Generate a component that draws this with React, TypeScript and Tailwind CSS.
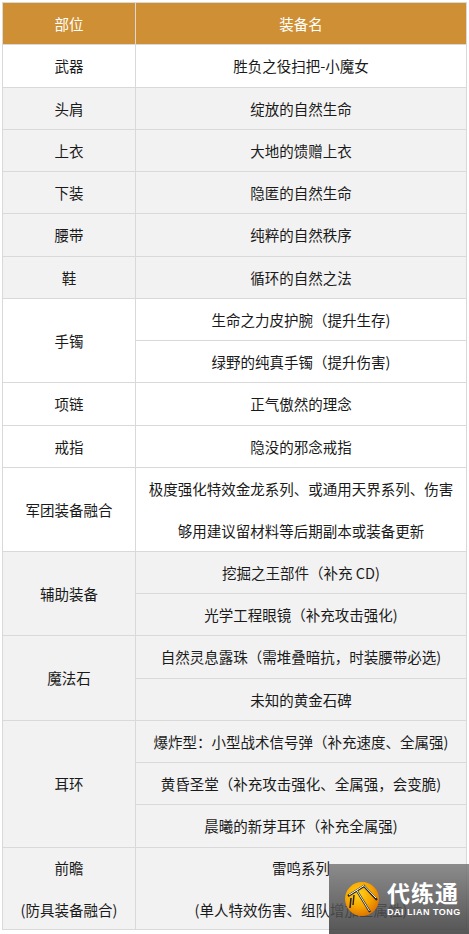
import React from "react";

type Row = {
  part: string[];
  items: string[][];
  h: number[];
  gray: boolean;
};

const rows: Row[] = [
  { part: ["武器"], items: [["胜负之役扫把-小魔女"]], h: [43], gray: false },
  { part: ["头肩"], items: [["绽放的自然生命"]], h: [42], gray: true },
  { part: ["上衣"], items: [["大地的馈赠上衣"]], h: [42], gray: true },
  { part: ["下装"], items: [["隐匿的自然生命"]], h: [42], gray: true },
  { part: ["腰带"], items: [["纯粹的自然秩序"]], h: [43], gray: true },
  { part: ["鞋"], items: [["循环的自然之法"]], h: [42], gray: true },
  {
    part: ["手镯"],
    items: [["生命之力皮护腕（提升生存)"], ["绿野的纯真手镯（提升伤害)"]],
    h: [42, 42],
    gray: false,
  },
  { part: ["项链"], items: [["正气傲然的理念"]], h: [43], gray: false },
  { part: ["戒指"], items: [["隐没的邪念戒指"]], h: [42], gray: false },
  {
    part: ["军团装备融合"],
    items: [["极度强化特效金龙系列、或通用天界系列、伤害", "够用建议留材料等后期副本或装备更新"]],
    h: [84],
    gray: false,
  },
  {
    part: ["辅助装备"],
    items: [["挖掘之王部件（补充 CD)"], ["光学工程眼镜（补充攻击强化)"]],
    h: [42, 42],
    gray: true,
  },
  {
    part: ["魔法石"],
    items: [["自然灵息露珠（需堆叠暗抗，时装腰带必选)"], ["未知的黄金石碑"]],
    h: [43, 42],
    gray: true,
  },
  {
    part: ["耳环"],
    items: [
      ["爆炸型：小型战术信号弹（补充速度、全属强)"],
      ["黄昏圣堂（补充攻击强化、全属强，会变脆)"],
      ["晨曦的新芽耳环（补充全属强)"],
    ],
    h: [42, 42, 43],
    gray: true,
  },
  {
    part: ["前瞻", "(防具装备融合)"],
    items: [["雷鸣系列", "(单人特效伤害、组队增加全属性)"]],
    h: [82],
    gray: true,
  },
];

// lines inside a cell sit ~42px apart, like the source table's paragraphs
function Lines({ lines }: { lines: string[] }) {
  return (
    <div className="flex flex-col items-center gap-[22px]">
      {lines.map((l, i) => (
        <div key={i} className="leading-[20px] whitespace-nowrap">
          {l}
        </div>
      ))}
    </div>
  );
}

function Watermark() {
  return (
    <div className="absolute left-[329px] top-[864px] w-[140px] h-[70px] bg-gradient-to-b from-[#7a7a7a]/85 to-[#3a3a3a]/85 flex items-center pl-[15px] gap-[7px]">
      <svg width="36" height="36" viewBox="0 0 36 36">
        <defs>
          <radialGradient id="og" cx="40%" cy="35%" r="65%">
            <stop offset="0%" stopColor="#ffd21a" />
            <stop offset="60%" stopColor="#f7a500" />
            <stop offset="100%" stopColor="#e07800" />
          </radialGradient>
        </defs>
        <circle cx="18" cy="18" r="17" fill="url(#og)" />
        <path d="M4 15 L20 5 L33 19" fill="none" stroke="#222" strokeWidth="2.2" />
        <path d="M5 14 L20 4.5 L32 17" fill="none" stroke="#fff" strokeWidth="1" />
        <path d="M13 10 L26 31" stroke="#222" strokeWidth="2.2" />
        <path d="M12.5 9 L25.5 30" stroke="#fff" strokeWidth="0.9" />
        <path d="M7 17 L6 27" stroke="#222" strokeWidth="1.6" />
        <path d="M10 14 L9 24" stroke="#222" strokeWidth="1.4" />
      </svg>
      <div className="flex flex-col items-start text-white">
        <div className="text-[23px] leading-[24px] font-bold tracking-[1px] [font-family:'Noto_Sans_CJK_SC',sans-serif]">
          代练通
        </div>
        <div className="text-[9px] leading-[12px] font-bold tracking-[0.5px] mt-[2px] [font-family:'Liberation_Sans',sans-serif]">
          DAI LIAN TONG
        </div>
      </div>
    </div>
  );
}

export default function App() {
  return (
    <div className="relative w-[469px] h-[934px] bg-white overflow-hidden [font-family:'Noto_Sans_CJK_SC',sans-serif] text-[14.5px] text-[#1a1a1a]">
      <div className="pt-[2px] pl-[2px]">
        <table className="border-collapse table-fixed w-[464px]">
          <colgroup>
            <col className="w-[133px]" />
            <col className="w-[331px]" />
          </colgroup>
          <thead>
            <tr className="h-[42px] bg-[#cf9035] text-white">
              <th className="border border-[#d9d9d9] font-normal p-0">部位</th>
              <th className="border border-[#d9d9d9] font-normal p-0">装备名</th>
            </tr>
          </thead>
          <tbody>
            {rows.flatMap((r, ri) =>
              r.items.map((it, ii) => (
                <tr
                  key={`${ri}-${ii}`}
                  className={r.gray ? "bg-[#f2f2f2]" : "bg-white"}
                  style={{ height: r.h[ii] }}
                >
                  {ii === 0 && (
                    <td
                      rowSpan={r.items.length}
                      className="border border-[#d9d9d9] p-0 text-center align-middle"
                    >
                      <Lines lines={r.part} />
                    </td>
                  )}
                  <td className="border border-[#d9d9d9] p-0 text-center align-middle">
                    <Lines lines={it} />
                  </td>
                </tr>
              ))
            )}
          </tbody>
        </table>
      </div>
      <Watermark />
    </div>
  );
}
